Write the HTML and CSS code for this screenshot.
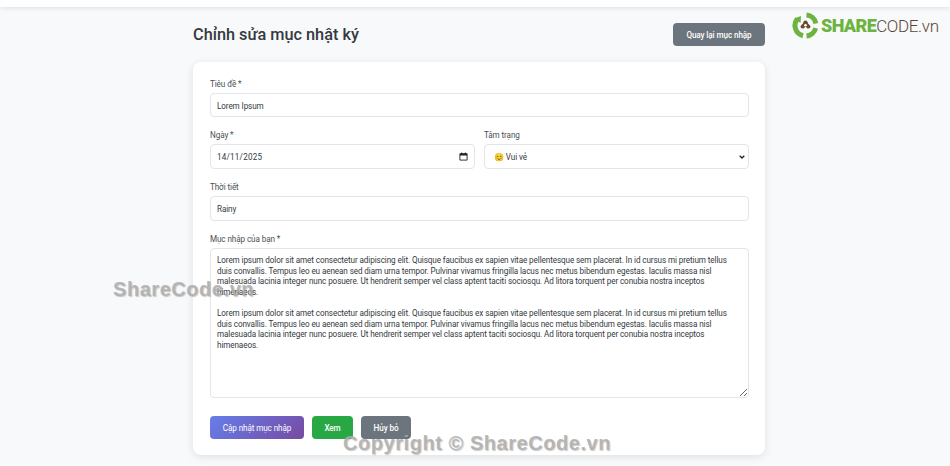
FILE: index.html
```html
<!DOCTYPE html>
<html lang="vi">
<head>
<meta charset="utf-8">
<title>Chỉnh sửa mục nhật ký</title>
<link rel="stylesheet" href="styles.css">
</head>
<body>
<nav class="topbar"></nav>
<main class="page">
  <header class="page-head">
    <h1 class="page-title">Chỉnh sửa mục nhật ký</h1>
    <a class="btn btn-gray btn-back" href="#">Quay lại mục nhập</a>
  </header>
  <form class="card">
    <div class="field">
      <label class="field-label">Tiêu đề *</label>
      <input class="control" type="text" value="Lorem Ipsum">
    </div>
    <div class="field-row">
      <div class="field">
        <label class="field-label">Ngày *</label>
        <div class="control-wrap">
          <input class="control control-tall control-date" type="text" value="14/11/2025">
          <svg class="control-icon icon-date" viewBox="0 0 10 10" width="9" height="9" aria-hidden="true">
            <path d="M1 2h8v7H1z" fill="none" stroke="#222" stroke-width="1"/>
            <path d="M1 1.600h8v2.200H1zM2.500.5h1v1.500h-1zM6.500.5h1v1.500h-1z" fill="#222"/>
          </svg>
        </div>
      </div>
      <div class="field">
        <label class="field-label">Tâm trạng</label>
        <div class="control-wrap">
          <select class="control control-tall control-select"><option>😊 Vui vẻ</option></select>
          <svg class="control-icon icon-chevron" viewBox="0 0 6 4" width="6" height="4" aria-hidden="true">
            <path d="M.7.7 3 3l2.300-2.300" fill="none" stroke="#222" stroke-width="1.300"/>
          </svg>
        </div>
      </div>
    </div>
    <div class="field">
      <label class="field-label">Thời tiết</label>
      <input class="control control-tall" type="text" value="Rainy">
    </div>
    <div class="field">
      <label class="field-label">Mục nhập của bạn *</label>
      <textarea class="control control-area">Lorem ipsum dolor sit amet consectetur adipiscing elit. Quisque faucibus ex sapien vitae pellentesque sem placerat. In id cursus mi pretium tellus duis convallis. Tempus leo eu aenean sed diam urna tempor. Pulvinar vivamus fringilla lacus nec metus bibendum egestas. Iaculis massa nisl malesuada lacinia integer nunc posuere. Ut hendrerit semper vel class aptent taciti sociosqu. Ad litora torquent per conubia nostra inceptos himenaeos.

Lorem ipsum dolor sit amet consectetur adipiscing elit. Quisque faucibus ex sapien vitae pellentesque sem placerat. In id cursus mi pretium tellus duis convallis. Tempus leo eu aenean sed diam urna tempor. Pulvinar vivamus fringilla lacus nec metus bibendum egestas. Iaculis massa nisl malesuada lacinia integer nunc posuere. Ut hendrerit semper vel class aptent taciti sociosqu. Ad litora torquent per conubia nostra inceptos himenaeos.</textarea>
    </div>
    <div class="actions">
      <button class="btn btn-primary" type="button">Cập nhật mục nhập</button>
      <button class="btn btn-green" type="button">Xem</button>
      <button class="btn btn-gray btn-cancel" type="button">Hủy bỏ</button>
    </div>
  </form>
</main>

<div class="logo">
  <svg class="logo-mark" viewBox="0 0 27 27" width="27" height="27" aria-hidden="true">
    <path d="M14.500 3.100a10.500 10.500 0 0 1 9.400 8.400" fill="none" stroke="#6cb33f" stroke-width="5"/>
    <path d="M23.700 16.200a10.500 10.500 0 0 1-9.200 7.700" fill="none" stroke="#6cb33f" stroke-width="5"/>
    <path d="M11 23.700A10.500 10.500 0 0 1 5.400 6.800" fill="none" stroke="#6cb33f" stroke-width="5"/>
    <path d="M2 6.500 9 4l-.4 7z" fill="#6cb33f"/>
    <path d="M13.500 8.500c1.600 0 2.400 1.500 2.400 2.800 0 .8 1.600 1.300 2.300 2.400.7 1.300-.2 2.800-1.800 2.800-1.200 0-1.900-1-2.900-1.800-1 .8-1.700 1.800-2.900 1.800-1.600 0-2.500-1.500-1.800-2.800.7-1.100 2.300-1.600 2.300-2.400 0-1.300.8-2.800 2.400-2.800z" fill="#6b4a2e"/>
    <circle cx="13.500" cy="13.300" r="1.300" fill="#fff"/>
  </svg>
  <span class="logo-text"><b class="logo-share">SHARE</b>CODE.vn</span>
</div>
<div class="mark mark-side">ShareCode.vn</div>
<div class="mark mark-foot">Copyright © ShareCode.vn</div>
</body>
</html>
```

FILE: styles.css
```css
* { box-sizing: border-box; }
html, body { margin: 0; height: 466px; overflow: hidden; }
body {
  background: #f8f9fa;
  color: #343a40;
  font-family: Roboto, "Noto Sans", sans-serif;
  position: relative;
}
.topbar {
  height: 7px;
  background: #fff;
  box-shadow: 0 1px 5px rgba(0, 0, 0, 0.1);
}
.page {
  width: 572px;
  margin-left: 193px;
  padding-top: 16px;
}
.page-head {
  display: flex;
  justify-content: space-between;
  align-items: center;
  height: 23px;
  margin-bottom: 16px;
}
.page-title {
  margin: 0;
  font-size: 16.300px;
  font-weight: 500;
  color: #343a40;
}
.btn {
  display: inline-flex;
  align-items: center;
  justify-content: center;
  height: 23px;
  border: 0;
  border-radius: 4px;
  padding: 0;
  color: #fff;
  font-family: inherit;
  font-size: 8.150px;
  font-weight: 500;
  letter-spacing: -0.100px;
  text-decoration: none;
}
.btn-gray { background: #6c757d; }
.btn-back { width: 92px; }
.btn-cancel { width: 50px; }
.btn-green { background: #28a745; width: 41px; }
.btn-primary { background: linear-gradient(135deg, #667eea, #764ba2); width: 94px; font-weight: 400; }
.card {
  background: #fff;
  border-radius: 8px;
  box-shadow: 0 2px 8px rgba(0, 0, 0, 0.1);
  height: 393px;
  padding: 16px 16px 16px 17px;
  display: flex;
  flex-direction: column;
}
.field { display: flex; flex-direction: column; flex: 1 1 0; min-width: 0; }
.field-row { display: flex; gap: 9px; }
.field-label {
  font-size: 8.150px;
  letter-spacing: -0.100px;
  line-height: 13px;
  margin-bottom: 2px;
  color: #495057;
}
.control-wrap { position: relative; }
.control {
  display: block;
  width: 100%;
  height: 24px;
  margin-bottom: 12px;
  padding: 1px 6px 0;
  border: 1px solid #e3e5e8;
  border-radius: 4px;
  background: #fff;
  color: #343a40;
  font-family: inherit;
  font-size: 8.150px;
  letter-spacing: -0.100px;
}
.control-tall { height: 25px; }
.control-date { letter-spacing: 0.200px; }
.control-select { appearance: none; padding-left: 9px; }
.control-icon { position: absolute; }
.icon-date { right: 7px; top: 8px; }
.icon-chevron { right: 4px; top: 11px; }
.control-area {
  height: 150px;
  padding: 6px;
  line-height: 10.600px;
  margin-bottom: 18px;
  resize: vertical;
}
.actions { display: flex; gap: 8px; }
.logo {
  position: absolute;
  left: 792px;
  top: 12px;
  display: flex;
  align-items: center;
  gap: 2px;
}
.logo-text {
  font-family: Roboto, sans-serif;
  font-weight: 300;
  font-size: 17px;
  letter-spacing: -0.350px;
  color: #5b4636;
}
.logo-share { color: #6cb33f; font-weight: 900; font-size: 18px; letter-spacing: -0.600px; }
.mark {
  position: absolute;
  font-family: "Liberation Sans", sans-serif;
  font-weight: 700;
  font-size: 20px;
  letter-spacing: 0.550px;
  color: rgba(175, 175, 175, 0.85);
  text-shadow: 1px 1px 1px rgba(80, 80, 80, 0.3);
  white-space: nowrap;
}
.mark-side { left: 113px; top: 278px; }
.mark-foot { left: 343px; top: 432px; }
```
